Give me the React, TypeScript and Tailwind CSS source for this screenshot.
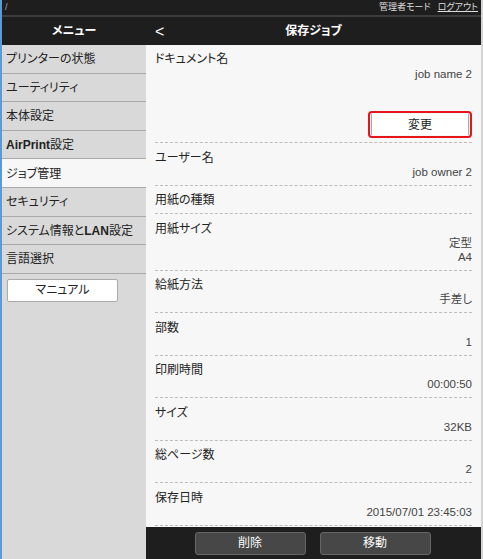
import React from "react";

type Row = { label: string; values?: string[] };

const rows: Row[] = [
  { label: "ユーザー名", values: ["job owner 2"] },
  { label: "用紙の種類" },
  { label: "用紙サイズ", values: ["定型", "A4"] },
  { label: "給紙方法", values: ["手差し"] },
  { label: "部数", values: ["1"] },
  { label: "印刷時間", values: ["00:00:50"] },
  { label: "サイズ", values: ["32KB"] },
  { label: "総ページ数", values: ["2"] },
  { label: "保存日時", values: ["2015/07/01 23:45:03"] },
];

const menu: { label: React.ReactNode; active?: boolean }[] = [
  { label: "プリンターの状態" },
  { label: "ユーティリティ" },
  { label: "本体設定" },
  { label: <><span className="font-bold">AirPrint</span>設定</> },
  { label: "ジョブ管理", active: true },
  { label: "セキュリティ" },
  { label: <>システム情報と<span className="font-bold">LAN</span>設定</> },
  { label: "言語選択" },
];

export default function App() {
  return (
    <div className="flex h-[559px] w-[483px] flex-col overflow-hidden border-l-2 border-r-2 border-l-[#5b9bd5] border-r-[#d4d4d4] bg-[#d9d9d9] font-['Liberation_Sans','Noto_Sans_CJK_JP',sans-serif] text-[12px] text-[#222] [font-feature-settings:'palt']">
      {/* top strip */}
      <div className="flex h-[15px] items-center justify-between bg-[#1e1e1e] px-[3px] text-[9px] leading-none text-[#ddd]">
        <span className="text-[#aaa]">/</span>
        <div className="flex items-center gap-[7px]">
          <span>管理者モード</span>
          <span className="underline">ログアウト</span>
        </div>
      </div>
      <div className="h-[2px] bg-[#3c3c3c]" />

      {/* header */}
      <div className="flex h-[28px] items-center bg-[#1e1e1e] font-bold text-white">
        <div className="w-[144px] text-center text-[12px]">メニュー</div>
        <div className="relative flex flex-1 items-center justify-center text-[12px]">
          <span className="absolute left-[9px] top-[-2px] text-[16px] font-normal">&lt;</span>
          <span>保存ジョブ</span>
        </div>
      </div>

      <div className="flex min-h-0 flex-1">
        {/* sidebar */}
        <nav className="flex w-[144px] flex-col bg-[#d9d9d9]">
          {menu.map((m, i) => (
            <div
              key={i}
              className={`flex h-[28.6px] items-center border-b border-[#a9a9a9] px-[4px] pt-[1px] ${m.active ? "bg-[#f7f7f7]" : ""}`}
            >
              {m.label}
            </div>
          ))}
          <div className="px-[5px] pt-[5px]">
            <button className="h-[23px] w-[111px] rounded-[2px] border border-[#aaa] bg-white text-[12px] text-[#222]">
              マニュアル
            </button>
          </div>
        </nav>

        {/* main */}
        <main className="flex min-w-0 flex-1 flex-col bg-[#f7f7f7]">
          <div className="min-h-0 flex-1 overflow-hidden pl-[9px] pr-[9px]">
            <div className="border-b border-dashed border-[#bdbdbd] pb-[4px] pt-[7px] leading-[14px]">
              <div>ドキュメント名</div>
              <div className="pt-[1px] text-right text-[11.5px] leading-[14px] text-[#444]">job name 2</div>
              <div className="mt-[30px] flex justify-end">
                <div className="rounded-[4px] border-2 border-[#e8141b] p-[1px]">
                  <button className="h-[21px] w-[98px] border-x border-[#aaa] bg-white text-[12px] text-[#222]">
                    変更
                  </button>
                </div>
              </div>
            </div>
            {rows.map((r) => (
              <div
                key={r.label}
                className="border-b border-dashed border-[#bdbdbd] pb-[6px] pt-[7.5px] leading-[14px]"
              >
                <div className="leading-[14px]">{r.label}</div>
                {r.values?.map((v) => (
                  <div key={v} className="text-right text-[11.5px] leading-[14px] text-[#444]">
                    {v}
                  </div>
                ))}
              </div>
            ))}
          </div>

          {/* bottom action bar */}
          <div className="flex h-[32px] items-center justify-center gap-[14px] bg-[#1e1e1e] pr-[2px]">
            <button className="h-[23px] w-[111px] rounded-[3px] border border-[#666] bg-[#474747] text-[12px] text-white">
              削除
            </button>
            <button className="h-[23px] w-[111px] rounded-[3px] border border-[#666] bg-[#474747] text-[12px] text-white">
              移動
            </button>
          </div>
        </main>
      </div>
    </div>
  );
}
